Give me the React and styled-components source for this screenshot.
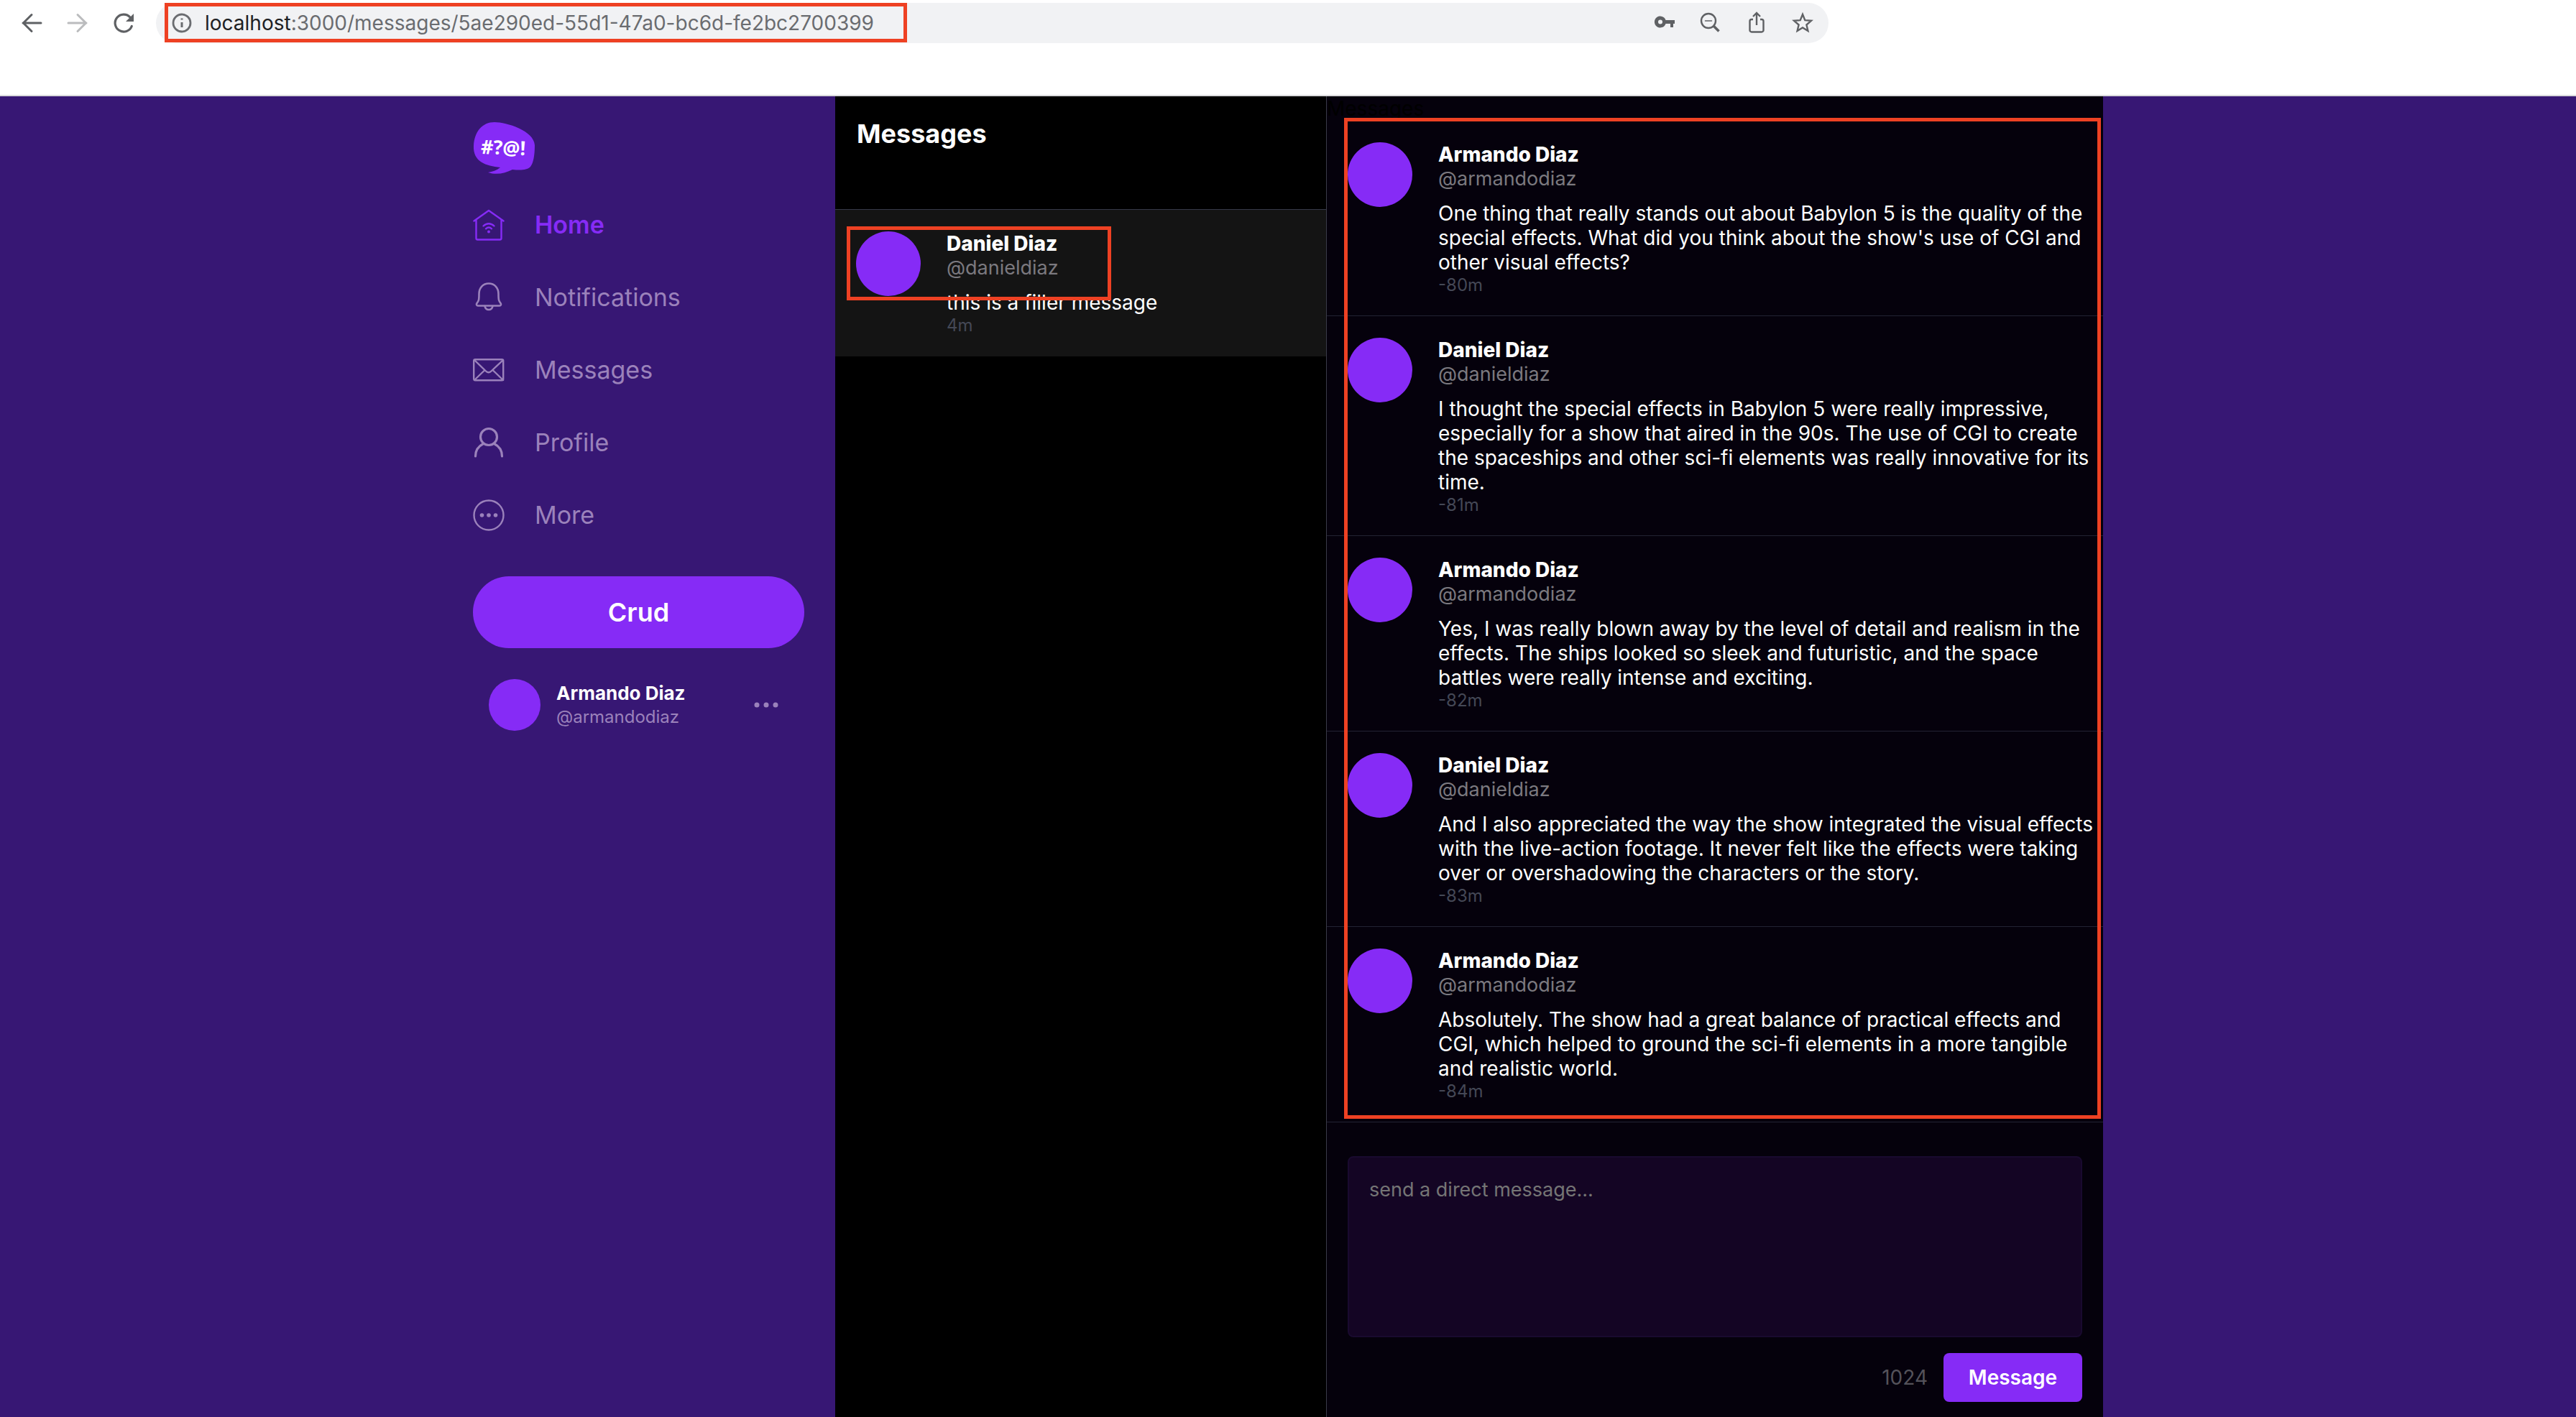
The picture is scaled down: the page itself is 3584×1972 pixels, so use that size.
import React from "react";
import styled, { createGlobalStyle } from "styled-components";

const purple = "#862bf6";
const muted = "#9b82bb";
const red = "#ee4123";

const GlobalStyle = createGlobalStyle`
  *, *::before, *::after { box-sizing: border-box; }
  body { margin: 0; background: #371774; font-family: Inter, "Liberation Sans", sans-serif; }
  h1, h2, p { margin: 0; }
  button, textarea, input { font-family: inherit; }
`;

const Page = styled.div`
  min-height: 100vh;
  display: flex;
  flex-direction: column;
`;

/* Browser toolbar */
const Toolbar = styled.header`
  height: 134px;
  padding: 4px 1040px 0 24px;
  display: flex;
  align-items: flex-start;
  background: #fff;
  border-bottom: 2px solid #dadadc;
`;

const ToolButtons = styled.div`
  height: 56px;
  flex: none;
  width: 193px;
  display: flex;
  align-items: center;
  gap: 24px;
`;

const IconButton = styled.button`
  padding: 0;
  border: 0;
  background: none;
  display: flex;
  color: ${(p) => p.$color || "#5f6164"};
`;

const AddressBar = styled.div`
  position: relative;
  flex: 1;
  height: 56px;
  padding: 0 20px;
  border-radius: 28px;
  background: #f1f2f4;
  display: flex;
  align-items: center;
  justify-content: space-between;
`;

const Address = styled.div`
  display: flex;
  align-items: center;
  gap: 14px;
  color: #6a6c70;
  font-size: 28px;
  line-height: 34px;
  white-space: nowrap;
  strong { color: #202124; font-weight: 400; }
`;

const AddressActions = styled.div`
  display: flex;
  gap: 32px;
`;

/* Red outline that lies over a region of the screen */
const Highlight = styled.div`
  position: absolute;
  inset: ${(p) => p.$inset};
  width: ${(p) => p.$width || "auto"};
  height: ${(p) => p.$height || "auto"};
  border: 5px solid ${red};
  pointer-events: none;
`;

/* App */
const AppShell = styled.div`
  flex: 1;
  display: grid;
  grid-template-columns: 504px 684px 1080px;
  justify-content: center;
  background: #371774;
`;

const Sidebar = styled.aside`
  padding: 36px 43px 0 0;
`;

const LogoMark = styled.svg`
  display: block;
`;

const Nav = styled.nav`
  margin-top: 18px;
  display: flex;
  flex-direction: column;
`;

const NavLink = styled.a`
  height: 101px;
  display: flex;
  align-items: center;
  gap: 42px;
  font-size: 34px;
  line-height: 44px;
  text-decoration: none;
  font-weight: ${(p) => (p.$active ? 600 : 400)};
  color: ${(p) => (p.$active ? purple : muted)};
`;

const CrudButton = styled.button`
  width: 100%;
  height: 100px;
  margin-top: 35px;
  border: 0;
  border-radius: 50px;
  background: ${purple};
  color: #fff;
  font-size: 36px;
  font-weight: 600;
`;

const Account = styled.div`
  margin-top: 43px;
  padding: 0 36px 0 22px;
  display: flex;
  align-items: center;
  gap: 22px;
`;

const AccountText = styled.div`
  flex: 1;
  line-height: 33px;
`;

const Avatar = styled.div`
  flex: none;
  width: ${(p) => p.$size}px;
  height: ${(p) => p.$size}px;
  border-radius: 50%;
  background: ${purple};
`;

const Name = styled.div`
  color: #fff;
  font-size: ${(p) => (p.$small ? 26 : 28)}px;
  font-weight: ${(p) => (p.$small ? 700 : 800)};
`;

const Handle = styled.div`
  color: ${(p) => (p.$small ? muted : "#7b797f")};
  font-size: ${(p) => (p.$small ? 24 : 27)}px;
`;

const Conversations = styled.section`
  position: relative;
  background: #000;
  border-right: 1px solid #3a3a48;
`;

const Title = styled.h1`
  height: 158px;
  padding: 30px;
  color: #fff;
  font-size: 36px;
  line-height: 44px;
  font-weight: 700;
  border-bottom: 1px solid #363848;
`;

const Item = styled.article`
  display: flex;
  gap: 36px;
  padding: 30px 6px 28px 29px;
  background: ${(p) => (p.$selected ? "#141414" : "transparent")};
  border-bottom: 1px solid ${(p) => (p.$selected ? "#141414" : "#232333")};
`;

const ItemText = styled.div`
  flex: 1;
  line-height: 34px;
`;

const Body = styled.p`
  margin-top: 14px;
  color: #fff;
  font-size: 28px;
`;

const Time = styled.div`
  color: #444856;
  font-size: 24px;
  line-height: 29px;
`;

const Thread = styled.main`
  position: relative;
  background: #05010c;
`;

const ThreadTitle = styled.div`
  height: 34px;
  font-size: 28px;
  line-height: 34px;
  color: #000;
`;

const Messages = styled.div`
  position: relative;
`;

const Form = styled.form`
  padding: 47px 29px 21px;
  display: flex;
  flex-direction: column;
  gap: 22px;
`;

const MessageBox = styled.textarea`
  display: block;
  width: 100%;
  height: 252px;
  padding: 28px;
  border: 2px solid #190a2f;
  border-radius: 8px;
  background: #140524;
  color: #fff;
  font-size: 27px;
  line-height: 34px;
  resize: none;
  &::placeholder { color: #757575; opacity: 1; }
`;

const FormFooter = styled.div`
  display: flex;
  justify-content: flex-end;
  align-items: center;
  gap: 22px;
`;

const Count = styled.span`
  color: #54525a;
  font-size: 28px;
`;

const SendButton = styled.button`
  width: 193px;
  height: 68px;
  padding: 0;
  border: 0;
  border-radius: 8px;
  background: ${purple};
  color: #fff;
  font-size: 28px;
  font-weight: 600;
`;

const Svg = ({ size = 44, w = 3, children }) => (
  <svg width={size} height={size} viewBox={`0 0 ${size} ${size}`} fill="none" stroke="currentColor" strokeWidth={w} strokeLinecap="round" strokeLinejoin="round" aria-hidden="true">
    {children}
  </svg>
);

const HomeIcon = () => (
  <Svg w={2.4}>
    <path d="M1.5 16.500 22 2l20.500 14.500M4.500 15v25.500a2 2 0 0 0 2 2h31a2 2 0 0 0 2-2V15" />
    <path d="M14.500 23.500c4.500-4.300 10.500-4.300 15 0M18 27.300c2.500-2.300 5.500-2.300 8 0" />
    <circle cx="22" cy="31.500" r="2" fill="currentColor" stroke="none" />
  </Svg>
);
const BellIcon = () => (
  <Svg w={2.6}>
    <path d="M8.500 17C8.500 8.500 14 2.500 22 2.500S35.500 8.500 35.500 17c0 9 .500 9.500 3 13 1.100 1.700.500 3.500-1.500 3.500H7c-2 0-2.600-1.800-1.500-3.500 2.500-3.500 3-4 3-13Z" />
    <path d="M16.500 34c.700 3.500 2.800 5 5.500 5s4.800-1.500 5.500-5" />
  </Svg>
);
const MailIcon = () => (
  <Svg w={2.4}>
    <rect x="1.200" y="7.200" width="41" height="29" rx="2" />
    <path d="m2 8 16 15.500c2.500 2.400 5 2.400 7.500 0L42 8M2 36l14.500-14M42 36 27.500 22" />
  </Svg>
);
const ProfileIcon = () => (
  <Svg w={3.2}>
    <circle cx="22" cy="14" r="11.500" />
    <path d="M3.500 41c0-8 4-14 11-17.500M40.500 41c0-8-4-14-11-17.500" />
  </Svg>
);
const MoreIcon = () => (
  <Svg w={2.4}>
    <circle cx="22" cy="22" r="20.500" />
    <g fill="currentColor" stroke="none">
      <circle cx="12.500" cy="22" r="2.800" />
      <circle cx="22" cy="22" r="2.800" />
      <circle cx="31.500" cy="22" r="2.800" />
    </g>
  </Svg>
);

const LogoText = styled.text`
  font: 700 27px "Open Sans", sans-serif;
  fill: #fff;
`;

const Logo = () => (
  <LogoMark width="88" height="74" viewBox="0 0 88 74" role="img" aria-label="Cruddur">
    <path fill={purple} d="M1 33C2 13 13 0 30 0c17 0 55 12 56 32 0 14-2 25-6 30-5 5-14 5-25 4-10 5-22 8-34 4 6-1 12-3 17-7C18 61 0 55 1 33Z" />
    <LogoText x="11" y="45" transform="rotate(2 43 36)">#?@!</LogoText>
  </LogoMark>
);

const nav = [
  ["Home", HomeIcon],
  ["Notifications", BellIcon],
  ["Messages", MailIcon],
  ["Profile", ProfileIcon],
  ["More", MoreIcon],
];

const armando = { name: "Armando Diaz", handle: "@armandodiaz" };
const daniel = { name: "Daniel Diaz", handle: "@danieldiaz" };

const messages = [
  { ...armando, time: "-80m", body: "One thing that really stands out about Babylon 5 is the quality of the special effects. What did you think about the show's use of CGI and other visual effects?" },
  { ...daniel, time: "-81m", body: "I thought the special effects in Babylon 5 were really impressive, especially for a show that aired in the 90s. The use of CGI to create the spaceships and other sci-fi elements was really innovative for its time." },
  { ...armando, time: "-82m", body: "Yes, I was really blown away by the level of detail and realism in the effects. The ships looked so sleek and futuristic, and the space battles were really intense and exciting." },
  { ...daniel, time: "-83m", body: "And I also appreciated the way the show integrated the visual effects with the live-action footage. It never felt like the effects were taking over or overshadowing the characters or the story." },
  { ...armando, time: "-84m", body: "Absolutely. The show had a great balance of practical effects and CGI, which helped to ground the sci-fi elements in a more tangible and realistic world." },
];

const MessageItem = ({ name, handle, body, time, selected }) => (
  <Item $selected={selected}>
    <Avatar $size={90} />
    <ItemText>
      <Name>{name}</Name>
      <Handle>{handle}</Handle>
      <Body>{body}</Body>
      <Time>{time}</Time>
    </ItemText>
  </Item>
);

export default function App() {
  return (
    <Page>
      <GlobalStyle />
      <Toolbar>
        <ToolButtons>
          <IconButton aria-label="Back"><Svg size={40}><path d="M33 20H8M20 8.500 8.500 20 20 31.500" strokeLinejoin="miter" /></Svg></IconButton>
          <IconButton aria-label="Forward" $color="#bbbcbe"><Svg size={40}><path d="M7 20h25M20 8.500 31.500 20 20 31.500" strokeLinejoin="miter" /></Svg></IconButton>
          <IconButton aria-label="Reload"><Svg size={40} w={3.2}><path d="M29 12A12 12 0 1 0 31.300 24.500" /><path d="M34 7v11H23Z" fill="currentColor" stroke="none" /></Svg></IconButton>
        </ToolButtons>
        <AddressBar>
          <Address>
            <Svg size={34} w={2.8}>
              <circle cx="16" cy="17" r="12" />
              <path d="M16 16v7M16 10.500v2" strokeWidth="3" strokeLinecap="butt" />
            </Svg>
            <span><strong>localhost</strong>:3000/messages/5ae290ed-55d1-47a0-bc6d-fe2bc2700399</span>
          </Address>
          <AddressActions>
            <IconButton aria-label="Passwords"><Svg size={32}><path fill="currentColor" fillRule="evenodd" stroke="none" d="M17.500 12H30v5h-2v5h-4v-5h-6.500A8 8 0 1 1 17.500 12ZM10 11.500a3 3 0 1 0 0 6 3 3 0 0 0 0-6Z" /></Svg></IconButton>
            <IconButton aria-label="Zoom"><Svg size={32} w={2.4}><circle cx="13" cy="13" r="10" /><path d="M8.500 13h9" strokeWidth="1.500" /><path d="m20.500 20.500 7 7" strokeWidth="3.500" strokeLinecap="butt" /></Svg></IconButton>
            <IconButton aria-label="Share"><Svg size={32} w={2.4}><path d="M11 11H9a2.500 2.500 0 0 0-2.500 2.500V26A2.500 2.500 0 0 0 9 28.500h14a2.500 2.500 0 0 0 2.500-2.500V13.500A2.500 2.500 0 0 0 23 11h-2M16 19V2.500M11 7l5-5 5 5" strokeLinecap="butt" strokeLinejoin="miter" /></Svg></IconButton>
            <IconButton aria-label="Bookmark"><Svg size={32} w={2.4}><path strokeLinejoin="miter" d="m16 4 3.300 8.100 8.700.700-6.600 5.700 2 8.500L16 22.500 8.600 27l2-8.500L4 12.800l8.700-.700Z" /></Svg></IconButton>
          </AddressActions>
          <Highlight $inset="0 auto auto 12px" $width="1033px" $height="55px" />
        </AddressBar>
      </Toolbar>

      <AppShell>
        <Sidebar>
          <Logo />
          <Nav>
            {nav.map(([label, Icon], i) => (
              <NavLink key={label} href="#" $active={i === 0}><Icon />{label}</NavLink>
            ))}
          </Nav>
          <CrudButton>Crud</CrudButton>
          <Account>
            <Avatar $size={72} />
            <AccountText>
              <Name $small>Armando Diaz</Name>
              <Handle $small>@armandodiaz</Handle>
            </AccountText>
            <IconButton aria-label="Account menu" $color={muted}>
              <svg width="34" height="8" viewBox="0 0 34 8" fill="currentColor"><circle cx="4" cy="4" r="3.500" /><circle cx="17" cy="4" r="3.500" /><circle cx="30" cy="4" r="3.500" /></svg>
            </IconButton>
          </Account>
        </Sidebar>

        <Conversations>
          <Title>Messages</Title>
          <MessageItem {...daniel} body="this is a filler message" time="4m" selected />
          <Highlight $inset="181px auto auto 16px" $width="368px" $height="103px" />
        </Conversations>

        <Thread>
          <ThreadTitle>Messages</ThreadTitle>
          <Messages>
            {messages.map((m) => <MessageItem key={m.time} {...m} />)}
            <Highlight $inset="-4px 3px 5px 24px" />
          </Messages>
          <Form onSubmit={(e) => e.preventDefault()}>
            <MessageBox aria-label="Direct message" placeholder="send a direct message..." />
            <FormFooter>
              <Count>1024</Count>
              <SendButton type="submit">Message</SendButton>
            </FormFooter>
          </Form>
        </Thread>
      </AppShell>
    </Page>
  );
}
